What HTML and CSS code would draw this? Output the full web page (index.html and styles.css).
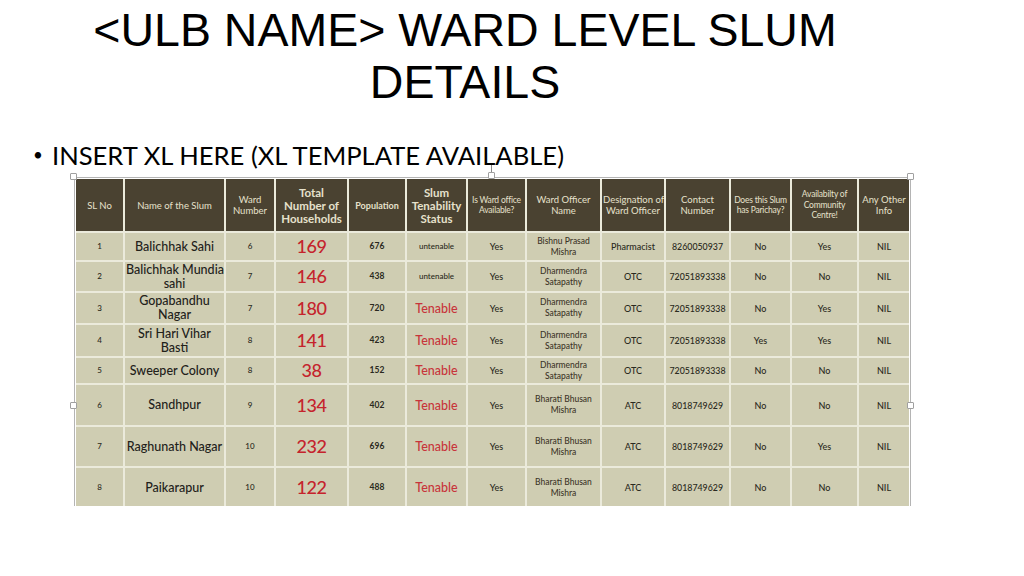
FILE: index.html
```html
<!DOCTYPE html>
<html>
<head>
<meta charset="utf-8">
<link rel="stylesheet" href="styles.css">
</head>
<body>
<h1 class="title">&lt;ULB NAME&gt; WARD LEVEL SLUM<br>DETAILS</h1>
<ul class="bullets">
  <li><span class="dot">•</span><span>INSERT XL HERE (XL TEMPLATE AVAILABLE)</span></li>
</ul>
<div class="frame">
  <span class="stem"></span>
  <span class="handle h-tl"></span>
  <span class="handle h-tm"></span>
  <span class="handle h-tr"></span>
  <span class="handle h-ml"></span>
  <span class="handle h-mr"></span>
  <div class="clip">
    <table class="slum">
      <colgroup>
        <col class="c1"><col class="c2"><col class="c3"><col class="c4"><col class="c5"><col class="c6"><col class="c7"><col class="c8"><col class="c9"><col class="c10"><col class="c11"><col class="c12"><col class="c13">
      </colgroup>
      <tr class="head">
        <td class="h">SL No</td>
        <td class="h">Name of the Slum</td>
        <td class="h">Ward<br>Number</td>
        <td class="hb">Total<br>Number of<br>Households</td>
        <td class="hp">Population</td>
        <td class="hb">Slum<br>Tenability<br>Status</td>
        <td class="hs">Is Ward office<br>Available?</td>
        <td class="h">Ward Officer<br>Name</td>
        <td class="h">Designation of<br>Ward Officer</td>
        <td class="h">Contact<br>Number</td>
        <td class="hs">Does this Slum<br>has Parichay?</td>
        <td class="hs">Availabilty of<br>Community<br>Centre!</td>
        <td class="h">Any Other<br>Info</td>
      </tr>
      <tr class="r1">
        <td class="sm">1</td><td class="nm">Balichhak Sahi</td><td class="sm">6</td><td class="hh">169</td><td class="pop">676</td><td class="un">untenable</td><td class="yn">Yes</td><td class="off">Bishnu Prasad<br>Mishra</td><td class="des">Pharmacist</td><td class="ph">8260050937</td><td class="yn">No</td><td class="yn">Yes</td><td class="yn">NIL</td>
      </tr>
      <tr class="r2">
        <td class="sm">2</td><td class="nm">Balichhak Mundia<br>sahi</td><td class="sm">7</td><td class="hh">146</td><td class="pop">438</td><td class="un">untenable</td><td class="yn">Yes</td><td class="off">Dharmendra<br>Satapathy</td><td class="des">OTC</td><td class="ph">72051893338</td><td class="yn">No</td><td class="yn">No</td><td class="yn">NIL</td>
      </tr>
      <tr class="r3">
        <td class="sm">3</td><td class="nm">Gopabandhu<br>Nagar</td><td class="sm">7</td><td class="hh">180</td><td class="pop">720</td><td class="ten">Tenable</td><td class="yn">Yes</td><td class="off">Dharmendra<br>Satapathy</td><td class="des">OTC</td><td class="ph">72051893338</td><td class="yn">No</td><td class="yn">Yes</td><td class="yn">NIL</td>
      </tr>
      <tr class="r4">
        <td class="sm">4</td><td class="nm">Sri Hari Vihar<br>Basti</td><td class="sm">8</td><td class="hh">141</td><td class="pop">423</td><td class="ten">Tenable</td><td class="yn">Yes</td><td class="off">Dharmendra<br>Satapathy</td><td class="des">OTC</td><td class="ph">72051893338</td><td class="yn">Yes</td><td class="yn">Yes</td><td class="yn">NIL</td>
      </tr>
      <tr class="r5">
        <td class="sm">5</td><td class="nm">Sweeper Colony</td><td class="sm">8</td><td class="hh">38</td><td class="pop">152</td><td class="ten">Tenable</td><td class="yn">Yes</td><td class="off">Dharmendra<br>Satapathy</td><td class="des">OTC</td><td class="ph">72051893338</td><td class="yn">No</td><td class="yn">No</td><td class="yn">NIL</td>
      </tr>
      <tr class="r6">
        <td class="sm">6</td><td class="nm">Sandhpur</td><td class="sm">9</td><td class="hh">134</td><td class="pop">402</td><td class="ten">Tenable</td><td class="yn">Yes</td><td class="off">Bharati Bhusan<br>Mishra</td><td class="des">ATC</td><td class="ph">8018749629</td><td class="yn">No</td><td class="yn">No</td><td class="yn">NIL</td>
      </tr>
      <tr class="r7">
        <td class="sm">7</td><td class="nm">Raghunath Nagar</td><td class="sm">10</td><td class="hh">232</td><td class="pop">696</td><td class="ten">Tenable</td><td class="yn">Yes</td><td class="off">Bharati Bhusan<br>Mishra</td><td class="des">ATC</td><td class="ph">8018749629</td><td class="yn">No</td><td class="yn">Yes</td><td class="yn">NIL</td>
      </tr>
      <tr class="r8">
        <td class="sm">8</td><td class="nm">Paikarapur</td><td class="sm">10</td><td class="hh">122</td><td class="pop">488</td><td class="ten">Tenable</td><td class="yn">Yes</td><td class="off">Bharati Bhusan<br>Mishra</td><td class="des">ATC</td><td class="ph">8018749629</td><td class="yn">No</td><td class="yn">No</td><td class="yn">NIL</td>
      </tr>
    </table>
  </div>
</div>
</body>
</html>
```
FILE: styles.css
```css
* { box-sizing: border-box; }
html, body { margin: 0; padding: 0; background: #ffffff; }
body { width: 1024px; height: 576px; overflow: hidden; font-family: "Liberation Sans", Arial, sans-serif; color: #000; }

.title {
  margin: 0;
  padding-top: 4px;
  width: 930px;
  text-align: center;
  font-family: "Liberation Sans", Arial, sans-serif;
  font-weight: normal;
  font-size: 46.5px;
  line-height: 52px;
  color: #000;
}

.bullets {
  list-style: none;
  margin: 31px 0 0 0;
  padding: 0 0 0 33px;
  font-family: Lato, "Liberation Sans", sans-serif;
  font-size: 25.6px;
  line-height: 32px;
  color: #000;
}
.bullets li { display: flex; }
.dot { width: 19px; flex: none; font-size: 17px; }

.frame {
  position: relative;
  margin: 6px 0 0 74px;
  width: 837px;
  border: 1px solid #b4b4b4;
  border-bottom: none;
  padding: 1px 1px 0 1px;
}
.clip { height: 327px; overflow: hidden; }

.handle {
  position: absolute;
  width: 7px;
  height: 7px;
  background: #fff;
  border: 1px solid #a0a0a0;
  border-radius: 1px;
}
.h-tl { left: -5px; top: -5px; }
.h-tm { left: 413px; top: -6px; }
.h-tr { left: 832px; top: -5px; }
.h-ml { left: -5px; top: 224px; }
.h-mr { left: 832px; top: 224px; }
.stem { position: absolute; left: 416px; top: -13px; width: 1px; height: 9px; background: #8a8a8a; }

.slum {
  width: 833px;
  table-layout: fixed;
  border-collapse: separate;
  border-spacing: 0;
  font-family: Lato, "Open Sans", sans-serif;
  background: #cfcdb2;
}
.c1 { width: 49px; } .c2 { width: 101px; } .c3 { width: 50px; } .c4 { width: 73px; }
.c5 { width: 58px; } .c6 { width: 61px; } .c7 { width: 59px; } .c8 { width: 75px; }
.c9 { width: 64px; } .c10 { width: 65px; } .c11 { width: 61px; } .c12 { width: 67px; } .c13 { width: 50px; }

.slum td {
  border-right: 2px solid #ebeadb;
  border-bottom: 2px solid #ebeadb;
  padding: 0 1px;
  text-align: center;
  vertical-align: middle;
  color: #2a2920;
  font-size: 9px;
  line-height: 11px;
  font-weight: 500;
  overflow: hidden;
  white-space: nowrap;
}
.slum td:last-child { border-right: none; }

.head td { background: #4a4231; color: #e6e1cc; font-weight: 400; }
.head { height: 54px; }
.r1 { height: 29px; } .r2 { height: 31px; } .r3 { height: 32px; } .r4 { height: 33px; }
.r5 { height: 27px; } .r6 { height: 42px; } .r7 { height: 41px; } .r8 { height: 41px; }

.slum td.h { font-size: 9.5px; line-height: 11px; }
.slum td.hs { font-size: 8.5px; line-height: 10.5px; letter-spacing: -0.2px; }
.slum td.hb { font-size: 11.5px; line-height: 13px; font-weight: bold; }
.slum td.hp { font-size: 9px; font-weight: bold; }

.slum td.sm { font-size: 8px; }
.slum td.nm { font-size: 12.5px; line-height: 14px; color: #22211a; }
.slum td.hh { font-size: 18px; color: #c5232c; letter-spacing: -0.5px; }
.slum td.pop { font-size: 8.5px; font-weight: bold; }
.slum td.un { font-size: 8px; }
.slum td.ten { font-size: 12.5px; color: #c8343a; }
.slum td.yn { font-size: 9px; }
.slum td.off { font-size: 8.5px; line-height: 11px; color: #3d3528; }
.slum td.des { font-size: 9px; }
.slum td.ph { font-size: 8.8px; }
```
